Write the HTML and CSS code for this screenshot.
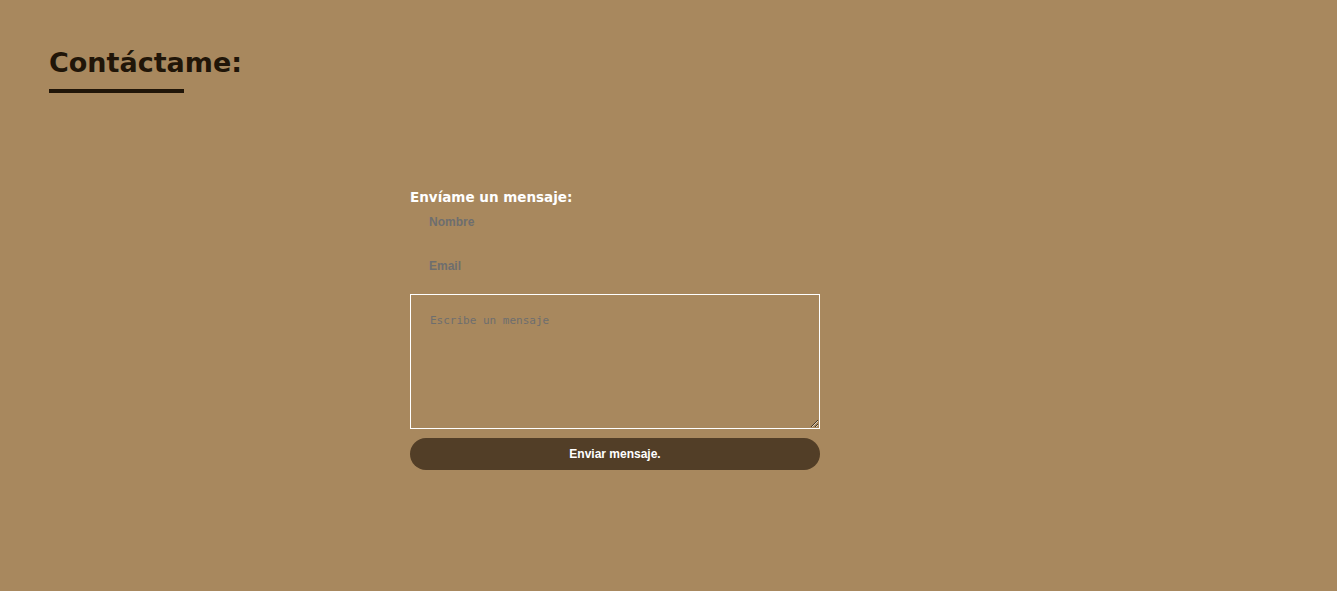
FILE: index.html
```html
<!DOCTYPE html>
<html lang="es">
<head>
<meta charset="utf-8">
<title>Contáctame</title>
<link rel="stylesheet" href="styles.css">
</head>
<body>
<section class="contact">
  <h2 class="contact-title">Contáctame:</h2>
  <div class="title-bar"></div>
  <div class="form-wrap">
    <form class="contact-form">
      <h3 class="form-title">Envíame un mensaje:</h3>
      <input class="field" type="text" placeholder="Nombre">
      <input class="field" type="email" placeholder="Email">
      <textarea class="message" placeholder="Escribe un mensaje"></textarea>
      <button class="send" type="button">Enviar mensaje.</button>
    </form>
  </div>
</section>
</body>
</html>
```
FILE: styles.css
```css
html, body {
  margin: 0;
  padding: 0;
  background: #a8885e;
}
body {
  height: 591px;
  overflow: hidden;
  font-family: "Liberation Sans", Arial, sans-serif;
}
.contact {
  padding: 45px 49px 0;
}
.contact-title {
  margin: 0;
  font-family: "DejaVu Sans", sans-serif;
  font-weight: bold;
  font-size: 27px;
  line-height: 36px;
  color: #201508;
}
.title-bar {
  width: 135px;
  height: 4px;
  margin-top: 8px;
  background: #201508;
}
.form-wrap {
  padding-left: 361px;
  margin-top: 95px;
}
.contact-form {
  width: 410px;
  display: flex;
  flex-direction: column;
}
.form-title {
  margin: 0;
  font-family: "DejaVu Sans", sans-serif;
  font-weight: bold;
  font-size: 13.5px;
  line-height: 18px;
  color: #ffffff;
}
.field {
  height: 44px;
  border: none;
  background: transparent;
  padding: 0 19px;
  margin-top: -12px;
  margin-bottom: 12px;
  font-family: "Liberation Sans", Arial, sans-serif;
  font-weight: bold;
  font-size: 12px;
  color: #333;
  outline: none;
  box-sizing: border-box;
}
.field:first-of-type {
  margin-top: -6px;
}
.field::placeholder {
  color: #6e6e6e;
}
.message {
  height: 135px;
  box-sizing: border-box;
  border: 1px solid #ffffff;
  background: transparent;
  padding: 19px 19px;
  margin: -6px 0 0;
  font-family: "DejaVu Sans Mono", monospace;
  font-size: 11px;
  resize: vertical;
  outline: none;
}
.message::placeholder {
  color: #6e6e6e;
}
.send {
  margin-top: 9px;
  height: 32px;
  border: none;
  border-radius: 16px;
  background: #523e27;
  color: #ffffff;
  font-family: "Liberation Sans", Arial, sans-serif;
  font-weight: bold;
  font-size: 12px;
  cursor: pointer;
}
```
